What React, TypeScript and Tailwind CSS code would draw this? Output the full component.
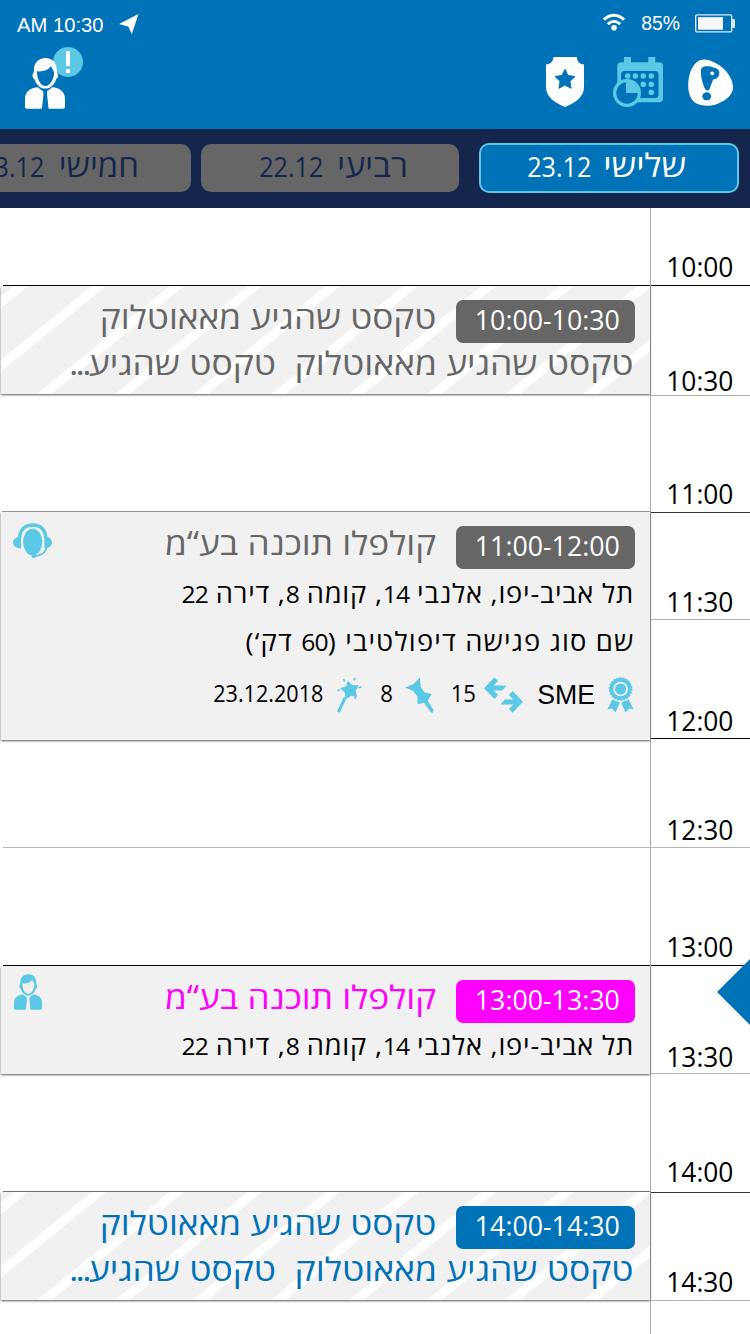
import React from 'react';
import clsx from 'clsx';

type Tone = 'gray' | 'magenta' | 'blue';

const badgeTone: Record<Tone, string> = {
  gray: 'bg-[#666666]',
  magenta: 'bg-[#ff00ff]',
  blue: 'bg-[#0072b8]',
};

const textTone: Record<Tone, string> = {
  gray: 'text-[#666666]',
  magenta: 'text-[#ff00ff]',
  blue: 'text-[#0072b8]',
};

const hours = [
  { label: '10:00', slot: 'h-[78px] pb-[8px] border-black' },
  { label: '10:30', slot: 'h-[110px] pb-[4px] border-[#b5b5b5]' },
  { label: '11:00', slot: 'h-[117px] pb-[8px] border-[#333333]' },
  { label: '11:30', slot: 'h-[107px] pb-[7px] border-[#b5b5b5]' },
  { label: '12:00', slot: 'h-[119px] pb-[7px] border-black' },
  { label: '12:30', slot: 'h-[109px] pb-[7px] border-[#b5b5b5]' },
  { label: '13:00', slot: 'h-[118px] pb-[8px] border-black' },
  { label: '13:30', slot: 'h-[108px] pb-[6px] border-[#b5b5b5]' },
  { label: '14:00', slot: 'h-[119px] pb-[10px] border-[#333333]' },
  { label: '14:30', slot: 'h-[108px] pb-[8px] border-[#b5b5b5]' },
];

const inactiveTab = 'mt-px h-12 w-[258px] bg-[#666666] text-[#14264c] leading-[41px]';

const days = [
  { day: 'חמישי', date: '23.12', tab: `${inactiveTab} mr-[10px] pr-[52px]`, dayClass: 'scale-x-[1.03] ml-[17px]' },
  { day: 'רביעי', date: '22.12', tab: `${inactiveTab} mr-5 pr-[51px]`, dayClass: 'scale-x-[1.06] ml-[18px]' },
  {
    day: 'שלישי',
    date: '23.12',
    tab: 'h-[50px] w-[260px] border-2 border-[#5bc8e6] bg-[#0072b8] pr-[51px] text-white leading-[40px]',
    dayClass: 'scale-x-[1.09] ml-[18px]',
  },
];

function PersonIcon({ className }: { className?: string }) {
  return (
    <svg viewBox="0 0 40 51" className={className} fill="currentColor">
      <path
        fillRule="evenodd"
        d="M20.500 0C13.500 0 9 5 9 11.500c0 1.500-.2 3-1 4.200-1 1.600-.6 4.300 1.400 5.200C11 26 14.800 30.600 20.300 30.600S29.700 26 31.200 20.900c2-.9 2.500-3.600 1.500-5.200-.7-1.200-1-2.700-1-4.200C31.700 5 27.500 0 20.500 0zM11.800 13.300c5.700.6 11.200-.9 14.200-5 .8 2.300 2.600 3.700 3.200 6.700C28.700 21 25.300 28 20.300 28S12.200 21 11.800 13.300z"
      />
      <path d="M13 29.200c1.200 1.600 3 2.800 4.800 3.500l.7 3.300-1.600 14.800H2c-1.300 0-2-.7-2-2V41c0-7 5-11.500 13-11.800z" />
      <path d="M27 29.200c-1.200 1.600-3 2.800-4.800 3.500l-.2 3.300 1.600 14.800H38c1.300 0 2-.7 2-2V41c0-7-5-11.500-13-11.800z" />
    </svg>
  );
}

function HeadsetIcon() {
  return (
    <svg viewBox="0 0 39 36" className="h-9 w-[39px] text-[#5bc8e6]" fill="currentColor">
      <ellipse cx="19.700" cy="19" rx="9.600" ry="13.300" />
      <path d="M6.700 15C6.700 6.500 12.500 2 19.700 2s13 4.500 13 13" fill="none" stroke="currentColor" strokeWidth="3.400" />
      <path d="M8 13.500v12C3.500 25.500 0 23 0 19.600s3.500-6.100 8-6.100zM31.400 13.500v12c4.500 0 7.600-2.500 7.600-5.900s-3.100-6.100-7.600-6.100z" />
      <path d="M33.300 24c0 5.500-4.300 8.300-12.500 9.300" fill="none" stroke="currentColor" strokeWidth="1.700" />
      <ellipse cx="20.800" cy="33.300" rx="2.200" ry="1.700" />
    </svg>
  );
}

function ShieldIcon() {
  return (
    <svg viewBox="0 0 38 50" className="h-[50px] w-[38px]">
      <path d="M7.500 0h23.300c.1 4.200 2.800 7.300 7.200 7.600V30c0 9.500-8 15.500-19 20C8 45.500 0 39.500 0 30V7.600C4.400 7.300 7.400 4.200 7.500 0z" fill="#fff" />
      <path d="M19 12.300l3 6.200 7 1-5.100 4.900 1.200 6.900-6.100-3.300-6.100 3.300 1.200-6.900L9 19.500l7-1z" fill="#0072b8" stroke="#0072b8" strokeLinejoin="round" />
    </svg>
  );
}

function CalendarIcon() {
  return (
    <svg viewBox="0 0 50 50" className="size-[50px]" fill="#5bc8e6">
      <path d="M11 0h7v5.300h17.300V0h7v5.300H46a4 4 0 0 1 4 4v32a4 4 0 0 1-4 4H8.300a4 4 0 0 1-4-4v-32a4 4 0 0 1 4-4H11z" />
      <rect x="8" y="14" width="37.500" height="27" rx="3.500" fill="#0072b8" />
      <circle cx="14.700" cy="19" r="2.800" />
      <circle cx="22.400" cy="19" r="2.800" />
      <circle cx="30.300" cy="19" r="2.800" />
      <circle cx="38.300" cy="19" r="2.800" />
      <circle cx="30.300" cy="27.300" r="2.800" />
      <circle cx="38.300" cy="27.300" r="2.800" />
      <circle cx="38.300" cy="35.300" r="2.800" />
      <circle cx="14" cy="36" r="14" />
      <circle cx="14" cy="36" r="10.700" fill="#0072b8" />
      <path d="M13 24.500a11 11 0 0 1 12 11.500H13z" />
    </svg>
  );
}

function BrandIcon() {
  return (
    <svg viewBox="0 0 45 47" className="h-[47px] w-[45px]">
      <path d="M12.500 1C19-1.500 30 4 36 10c6 6 10 14 8.800 20.500C43.500 37 37 42 28 45.500 18 48 8.500 46.500 4.300 41-.3 35-.5 26 1 18 2.800 9 7 3 12.500 1z" fill="#fff" />
      <path d="M13.300 9.500c2-3 9-2.500 12.500-.8 4.500.3 6.500 4 5.200 7.500-1 2.600-3.500 4.200-6 4.200-.6 2.800-2.500 6-3.300 9-.6 2.600-3.800 2.600-4.700.3C14.200 24 12 15 13.300 9.500z" fill="#0072b8" />
      <circle cx="24.200" cy="14.300" r="1.900" fill="#fff" />
      <ellipse cx="18.700" cy="37.300" rx="4.400" ry="4" fill="#0072b8" />
    </svg>
  );
}

function MedalIcon() {
  return (
    <svg viewBox="0 0 27 36" className="h-9 w-[27px]" fill="#5bc8e6">
      <circle cx="13.600" cy="12" r="9.200" fill="none" stroke="#5bc8e6" strokeWidth="3.800" />
      <circle cx="13.600" cy="12" r="11.200" fill="none" stroke="#5bc8e6" strokeWidth="1.200" strokeDasharray="2 1.200" />
      <circle cx="13.600" cy="12" r="5.600" />
      <path d="M5.300 22.500l7.500 3-4.300 10-3.700-4L.3 32.600zM21.700 22.500l-7.500 3 4.300 10 3.700-4 4.500 1.100z" />
    </svg>
  );
}

function ArrowsIcon() {
  return (
    <svg viewBox="0 0 39 36" className="h-9 w-[39px]" fill="#5bc8e6">
      <path d="M0 11.300L10.400.3l3.700 3.700-4.500 4.500H22.500l-4.300 5H9.600l4.500 4.500-3.700 3.900z" />
      <path d="M39 24.700l-10.400 11-3.700-3.700 4.500-4.500H16.500l4.300-5h8.600l-4.500-4.500 3.700-3.900z" />
    </svg>
  );
}

function PinIcon() {
  return (
    <svg viewBox="0 0 29 36" className="h-9 w-[29px]" fill="#5bc8e6">
      <path d="M15 .3l.6 9.500 4.200 5.600 6.900 1.700-4 6.600 5.800 9-.5 3-2-.3-7-9.700-6.300 1.600-.4-8-4.300-5.200L.3 10.500 8.500 7z" />
    </svg>
  );
}

function WandIcon() {
  return (
    <svg viewBox="0 0 25 36" className="h-9 w-[25px]" fill="#5bc8e6">
      <path d="M10.600 3.700l4.600 4.400 6.700.3-3.200 5.300 1.500 6.500-6-1.400-5.600 3.600-.7-6.600L2.900 11l6.200-1.600z" />
      <path d="M8.200 20.500L1.400 35.200" stroke="#5bc8e6" strokeWidth="3" />
      <path d="M7.600 4.500L6.500 2.200M17 3.400l1-2.600M21.800 10.700l2.700-.8M.6 12.700l2.300 1M17.600 19.700l1.200 2.200" stroke="#5bc8e6" strokeWidth="1.700" />
    </svg>
  );
}

function StatusBar() {
  return (
    <div className="flex h-12 items-center pl-[17px] pr-[15px] font-['Liberation_Sans',sans-serif] text-[20px] text-white">
      <span className="mt-px origin-left scale-x-[1.01]">AM 10:30</span>
      <svg viewBox="0 0 20 20" className="ml-4 size-5" fill="#fff">
        <path d="M0 10L19.500 0l-6.700 20-3.600-7.500z" />
      </svg>
      <svg viewBox="0 0 22 18" className="ml-auto -mt-[5px] h-[18px] w-[22px]" fill="none" stroke="#fff" strokeWidth="3">
        <path d="M1 6.700c6-6 14-6 20 0M4.800 11.200c3.700-3.500 8.700-3.500 12.400 0" />
        <circle cx="11" cy="14.800" r="2.800" fill="#fff" stroke="none" />
      </svg>
      <span className="ml-[15px] -mt-0.5 origin-right scale-x-[0.97]">85%</span>
      <svg viewBox="0 0 40 19" className="ml-[15px] -mt-0.5 h-[19px] w-10">
        <rect x=".7" y=".9" width="36" height="17" rx="1.500" fill="none" stroke="#d5e8f3" strokeWidth="1.400" />
        <rect x="3" y="3.200" width="25" height="12.500" fill="#f7f8f7" />
        <rect x="37" y="5" width="3" height="9" rx="1" fill="#d5e8f3" />
      </svg>
    </div>
  );
}

function Header() {
  return (
    <header className="h-[129px] bg-[#0072b8]">
      <StatusBar />
      <div className="flex items-start pl-[25px] pr-[17px] pt-[10px]">
        <div className="relative text-white">
          <span className="absolute -top-[11px] left-7 flex size-[30px] flex-col items-center gap-[3px] rounded-full bg-[#5bc8e6] pt-1">
            <i className="h-[15px] w-1 bg-white" />
            <i className="h-1 w-1 bg-white" />
          </span>
          <PersonIcon className="relative h-[51px] w-10" />
        </div>
        <div className="ml-auto flex items-start">
          <div className="-mt-px mr-[29px]"><ShieldIcon /></div>
          <div className="-mt-px mr-[25px]"><CalendarIcon /></div>
          <div className="mt-px"><BrandIcon /></div>
        </div>
      </div>
    </header>
  );
}

function DayTabs() {
  return (
    <nav className="flex h-[79px] justify-end overflow-hidden bg-[#14264c] pr-[11px] pt-[14px]">
      {days.map(({ day, date, tab, dayClass }) => (
        <div key={day} dir="rtl" className={clsx('flex shrink-0 items-baseline rounded-[10px]', tab)}>
          <span className={clsx('origin-right text-[32px]', dayClass)}>{day}</span>
          <span className="origin-right scale-x-[0.9] text-[28px]">{date}</span>
        </div>
      ))}
    </nav>
  );
}

interface MeetingCardProps {
  time: string;
  title: string;
  tone: Tone;
  striped?: boolean;
  className?: string;
  icon?: React.ReactNode;
  children?: React.ReactNode;
}

function MeetingCard({ time, title, tone, striped, className, icon, children }: MeetingCardProps) {
  return (
    <article
      dir="rtl"
      className={clsx(
        'relative ml-px shrink-0 pr-[15px] pt-[14px] shadow-[0_1px_2px_rgba(0,0,0,0.65)]',
        striped
          ? 'bg-[repeating-linear-gradient(140.8deg,#f1f1f1_0px,#f1f1f1_7.5px,#ffffff_8.5px,#ffffff_16.5px,#f1f1f1_17.5px,#f1f1f1_49.3px)]'
          : 'bg-[#f1f1f1]',
        className
      )}
    >
      <div className="flex h-[43px]">
        <div className={clsx('h-[43px] w-[179px] rounded-[7px] pr-[15px] text-[28px] leading-[38px] text-white', badgeTone[tone])}>
          <span className="inline-block origin-right scale-x-[0.955]">{time}</span>
        </div>
        <h2 className={clsx('mr-5 whitespace-nowrap text-[32px] leading-[34px]', textTone[tone])}>
          <span className="inline-block origin-right scale-x-[1.102]">{title}</span>
        </h2>
      </div>
      {children}
      {icon}
    </article>
  );
}

function Num({ children }: { children: React.ReactNode }) {
  return <span className="text-[23.5px] tracking-[-0.8px]">{children}</span>;
}

function DetailLine({ className, children }: { className: string; children: React.ReactNode }) {
  return (
    <p className="mr-px h-12 whitespace-nowrap text-[26px] leading-[44px] text-black">
      <span className={clsx('inline-block origin-right scale-x-[1.05]', className)}>{children}</span>
    </p>
  );
}

function Address() {
  return (
    <DetailLine className="tracking-[0.72px]">
      תל אביב-יפו, אלנבי <Num>14</Num>, קומה <Num>8</Num>, דירה <Num>22</Num>
    </DetailLine>
  );
}

function OutlookLine({ tone }: { tone: Tone }) {
  return (
    <p className={clsx('mr-px whitespace-pre text-[32px] leading-[40px]', textTone[tone])}>
      <span className="inline-block origin-right scale-x-[1.11]">
        {'טקסט שהגיע מאאוטלוק  טקסט שהגיע'}
        <span className="tracking-[-2.5px]">...</span>
      </span>
    </p>
  );
}

export default function App() {
  return (
    <div className="flex h-[1334px] w-[750px] flex-col overflow-hidden bg-white font-['Open_Sans','Noto_Sans',sans-serif]">
      <Header />
      <DayTabs />
      <main className="flex flex-1">
        <div className="relative z-10 flex w-[650px] flex-col">
          <div className="ml-[3px] h-[78px] shrink-0 border-b border-black" />
          <MeetingCard time="10:00-10:30" title="טקסט שהגיע מאאוטלוק" tone="gray" striped className="h-[108px]">
            <OutlookLine tone="gray" />
          </MeetingCard>
          <div className="ml-0.5 h-[118px] shrink-0 border-b border-[#999999]" />
          <MeetingCard
            time="11:00-12:00"
            title="קולפלו תוכנה בע“מ"
            tone="gray"
            className="h-[228px]"
            icon={<div className="absolute left-3 top-[11px]"><HeadsetIcon /></div>}
          >
            <div className="pt-0.5">
              <Address />
              <DetailLine className="tracking-[1.12px]">
                שם סוג פגישה דיפולטיבי (<Num>60</Num> דק‘)
              </DetailLine>
            </div>
            <div className="mr-px mt-[10px] flex h-9 items-center text-[24px] leading-8 text-black">
              <MedalIcon />
              <span className="mr-3 w-[58px] origin-right scale-x-[0.97] font-['Liberation_Sans',sans-serif] text-[27.5px]">SME</span>
              <span className="mr-[14px]"><ArrowsIcon /></span>
              <span className="mr-2 -mt-1 w-[25px] origin-right scale-x-[0.92]">15</span>
              <span className="mr-[17px]"><PinIcon /></span>
              <span className="mr-3 -mt-1 w-[13px] origin-right scale-x-[0.92]">8</span>
              <span className="mr-[18px]"><WandIcon /></span>
              <span className="mr-[14px] -mt-1 origin-right scale-x-[0.9]">23.12.2018</span>
            </div>
          </MeetingCard>
          <div className="ml-[3px] h-[108px] shrink-0 border-b border-[#b5b5b5]" />
          <div className="ml-[3px] h-[118px] shrink-0 border-b border-black" />
          <MeetingCard
            time="13:00-13:30"
            title="קולפלו תוכנה בע“מ"
            tone="magenta"
            className="h-[108px]"
            icon={<PersonIcon className="absolute left-[13px] top-2 h-9 w-7 text-[#5bc8e6]" />}
          >
            <Address />
          </MeetingCard>
          <div className="ml-[3px] h-[118px] shrink-0 border-b border-[#777777]" />
          <MeetingCard time="14:00-14:30" title="טקסט שהגיע מאאוטלוק" tone="blue" striped className="h-[108px]">
            <OutlookLine tone="blue" />
          </MeetingCard>
        </div>

        <aside className="relative w-[100px] border-l border-[#aaaaaa] text-[28px] leading-[22px] text-black">
          {hours.map(({ label, slot }) => (
            <div key={label} className={clsx('flex items-end justify-end border-b pr-[17px]', slot)}>
              <span className="origin-right scale-x-[0.94]">{label}</span>
            </div>
          ))}
          {/* current time marker */}
          <div className="absolute right-0 top-[751px] h-[66px] w-[33px] bg-[#0072b8] [clip-path:polygon(0_50%,100%_0,100%_100%)]" />
        </aside>
      </main>
    </div>
  );
}
